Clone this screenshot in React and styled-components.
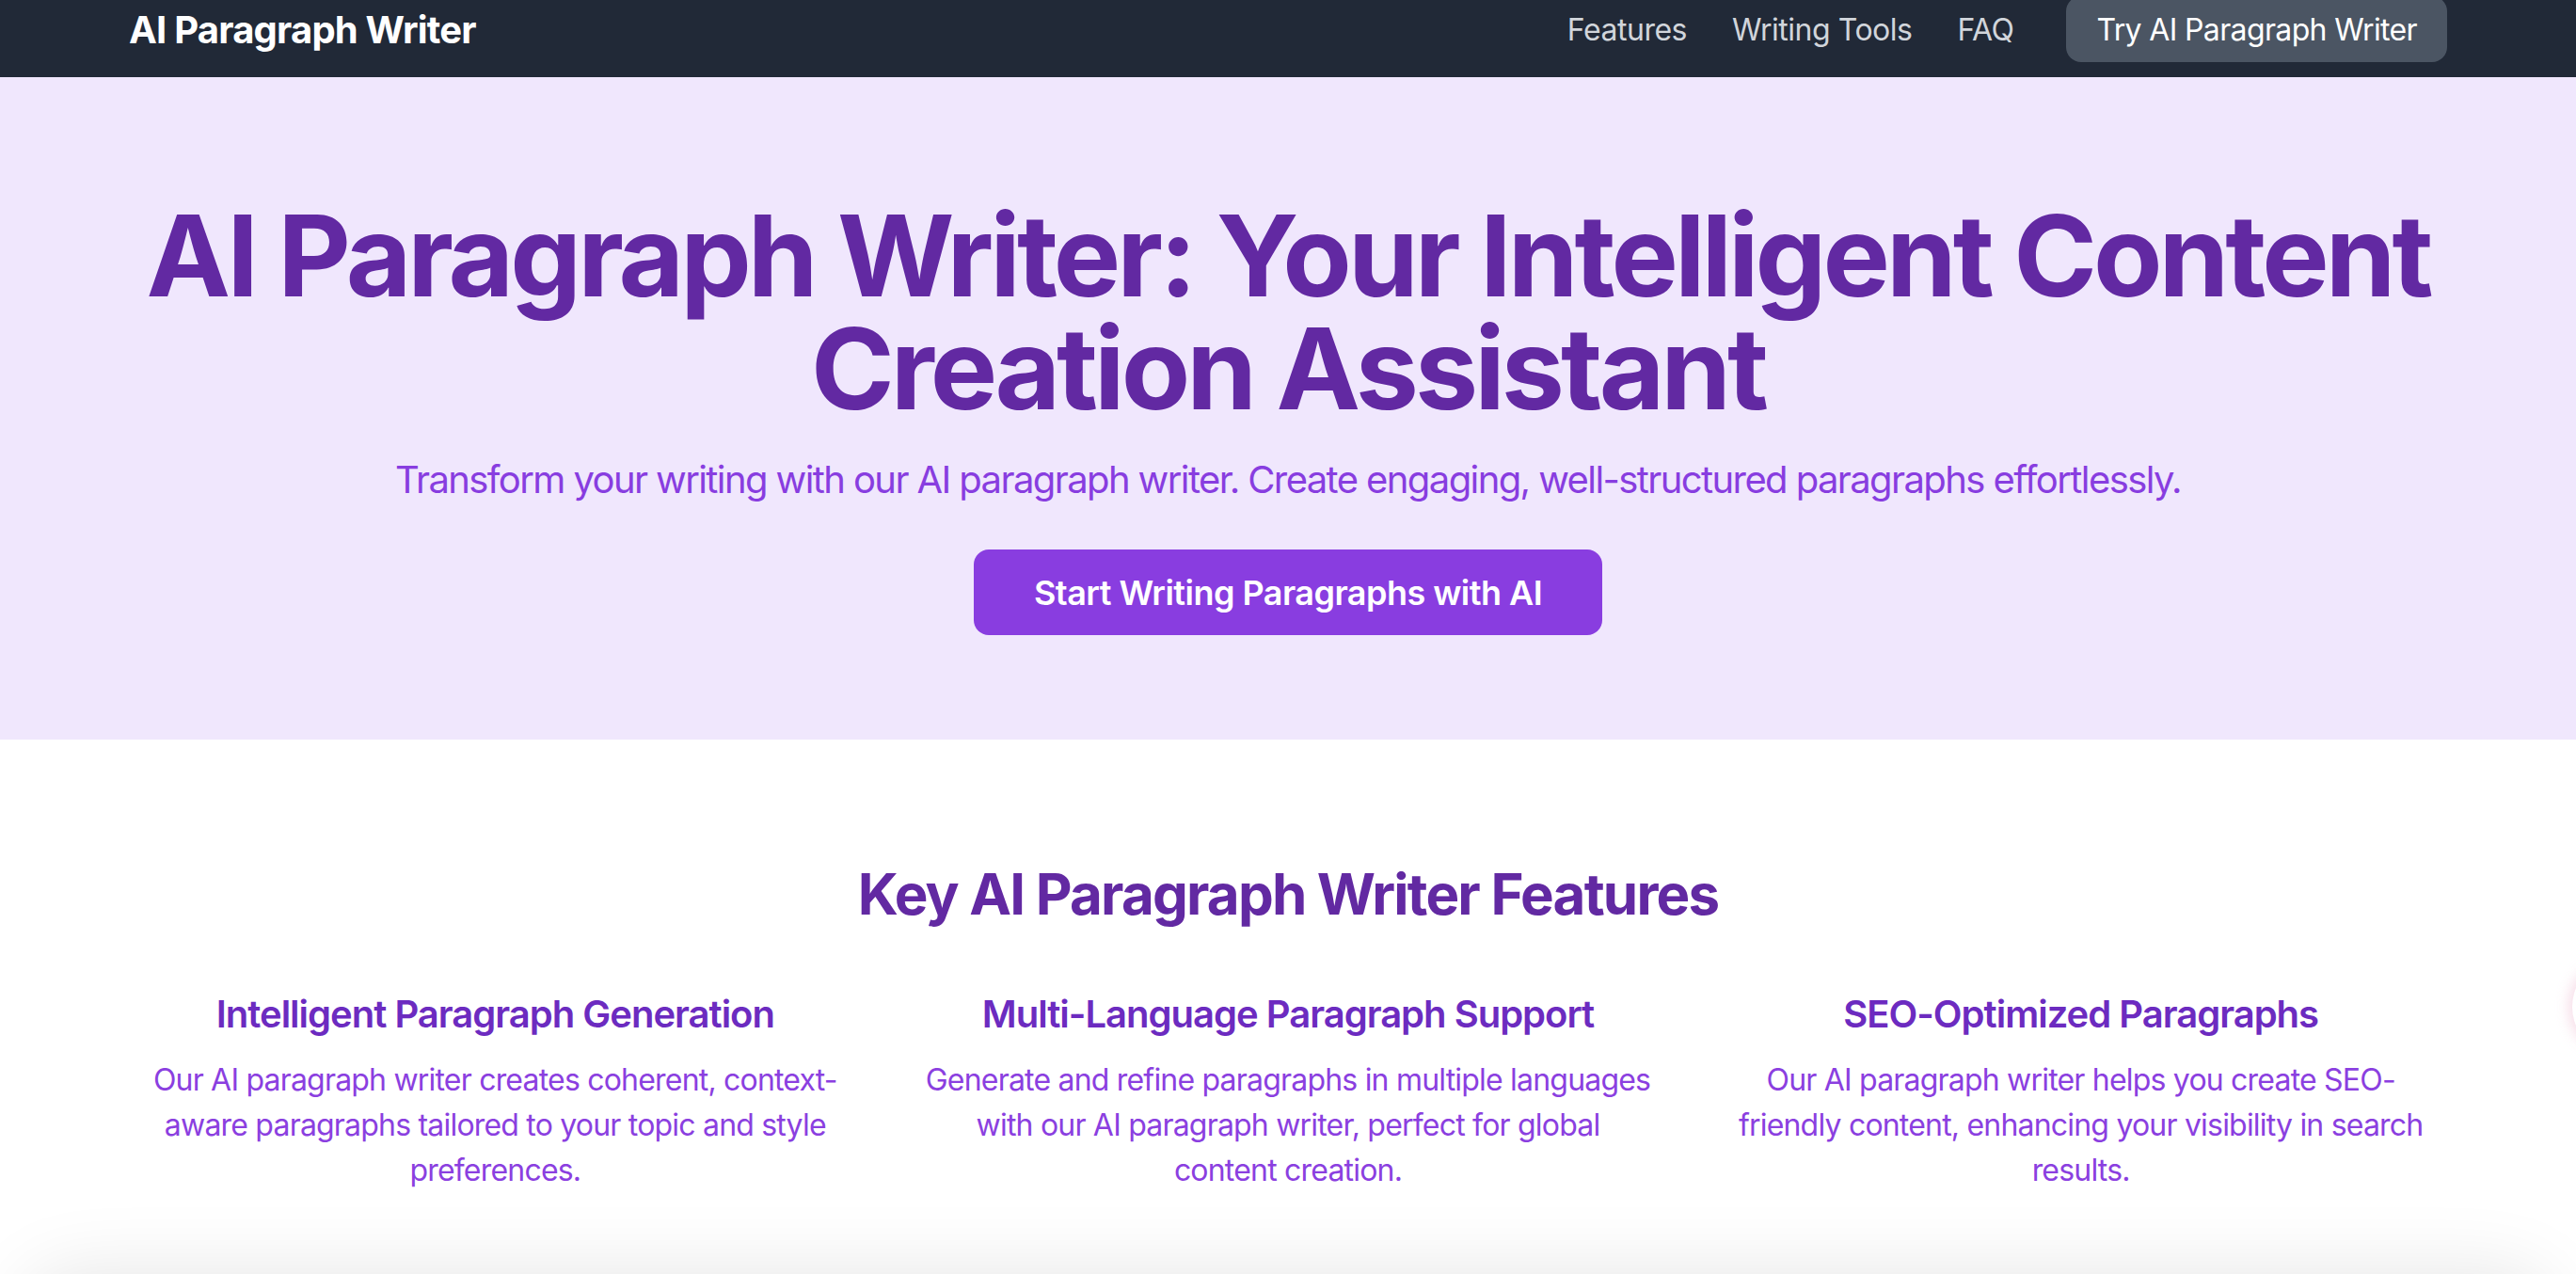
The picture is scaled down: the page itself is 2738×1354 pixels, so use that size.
import React from 'react';
import styled, { createGlobalStyle } from 'styled-components';

const GlobalStyle = createGlobalStyle`
  html, body {
    margin: 0;
    padding: 0;
    background: #fff;
  }
  body {
    font-family: Inter, "Noto Sans", "Liberation Sans", sans-serif;
    -webkit-font-smoothing: antialiased;
  }
  * { box-sizing: border-box; }
`;

const Page = styled.div`
  position: relative;
  height: 100vh;
  overflow: hidden;
`;

const Container = styled.div`
  max-width: 2560px;
  margin: 0 auto;
  padding: 0 48px;
`;

const NavBar = styled.nav`
  background: #212937;
  height: 82px;
  overflow: hidden;
`;

const NavInner = styled(Container)`
  display: flex;
  align-items: center;
  justify-content: space-between;
  height: 70px;
  margin-top: -4px;
`;

const Logo = styled.a`
  color: #fff;
  font-size: 40px;
  font-weight: 700;
  letter-spacing: -0.02em;
  text-decoration: none;
`;

const NavLinks = styled.div`
  display: flex;
  align-items: center;
  gap: 48px;
  height: 100%;
`;

const NavLink = styled.a`
  color: #d1d5db;
  font-size: 32px;
  letter-spacing: -0.015em;
  text-decoration: none;
`;

const NavButton = styled.a`
  display: flex;
  align-items: center;
  height: 100%;
  margin-left: 8px;
  padding: 0 32px;
  border-radius: 16px;
  background: #4b5563;
  color: #fff;
  font-size: 32px;
  letter-spacing: -0.02em;
  text-decoration: none;
`;

const Hero = styled.header`
  background: #f0e7fd;
  padding: 130px 0 111px;
  text-align: center;
`;

const HeroTitle = styled.h1`
  margin: 0 0 30px;
  color: #6229a2;
  font-size: 120px;
  font-weight: 700;
  line-height: 1;
  letter-spacing: -0.033em;
`;

const TitleLine = styled.span`
  display: block;
  white-space: nowrap;
`;

const HeroSub = styled.p`
  margin: 0 0 46px;
  color: #883de0;
  font-size: 40px;
  line-height: 56px;
  letter-spacing: -0.04em;
`;

const PrimaryButton = styled.a`
  display: inline-flex;
  align-items: center;
  height: 91px;
  padding: 0 64px;
  border-radius: 16px;
  background: #893de0;
  color: #fff;
  font-size: 36px;
  font-weight: 600;
  letter-spacing: -0.015em;
  text-decoration: none;
`;

const Features = styled.section`
  padding: 128px 0 100px;
  text-align: center;
`;

const SectionTitle = styled.h2`
  margin: 0 0 64px;
  color: #6229a2;
  font-size: 60px;
  font-weight: 700;
  line-height: 72px;
  letter-spacing: -0.03em;
`;

const FeatureGrid = styled.div`
  display: grid;
  grid-template-columns: repeat(3, 1fr);
  gap: 64px;
`;

const FeatureCard = styled.div`
  padding: 0 3px;
`;

const FeatureTitle = styled.h3`
  margin: 0 0 18px;
  color: #6c2bc0;
  font-size: 40px;
  font-weight: 600;
  line-height: 56px;
  letter-spacing: -0.025em;
`;

const FeatureText = styled.p`
  margin: 0;
  color: #8b3fe0;
  font-size: 32px;
  line-height: 48px;
  letter-spacing: -0.025em;
`;

const NextCard = styled.div`
  margin: 0 40px;
  height: 400px;
  border-radius: 40px;
  background: #fff;
  box-shadow: 0 0 80px 16px rgba(0, 0, 0, 0.1);
`;

const ChatBubble = styled.div`
  position: absolute;
  top: 1030px;
  right: -56px;
  width: 60px;
  height: 80px;
  border-radius: 50%;
  background: #fff;
  box-shadow: 0 0 14px 4px rgba(236, 180, 205, 0.45);
`;

const features = [
  {
    title: 'Intelligent Paragraph Generation',
    text: 'Our AI paragraph writer creates coherent, context-aware paragraphs tailored to your topic and style preferences.',
  },
  {
    title: 'Multi-Language Paragraph Support',
    text: 'Generate and refine paragraphs in multiple languages with our AI paragraph writer, perfect for global content creation.',
  },
  {
    title: 'SEO-Optimized Paragraphs',
    text: 'Our AI paragraph writer helps you create SEO-friendly content, enhancing your visibility in search results.',
  },
];

const App = () => {
  return (
    <Page>
      <GlobalStyle />
      <NavBar>
        <NavInner>
          <Logo href="#">AI Paragraph Writer</Logo>
          <NavLinks>
            <NavLink href="#features">Features</NavLink>
            <NavLink href="#tools">Writing Tools</NavLink>
            <NavLink href="#faq">FAQ</NavLink>
            <NavButton href="#try">Try AI Paragraph Writer</NavButton>
          </NavLinks>
        </NavInner>
      </NavBar>
      <Hero>
        <Container>
          <HeroTitle>
            <TitleLine>AI Paragraph Writer: Your Intelligent Content</TitleLine>
            <TitleLine>Creation Assistant</TitleLine>
          </HeroTitle>
          <HeroSub>
            Transform your writing with our AI paragraph writer. Create engaging, well-structured paragraphs effortlessly.
          </HeroSub>
          <PrimaryButton href="#start">Start Writing Paragraphs with AI</PrimaryButton>
        </Container>
      </Hero>
      <Features id="features">
        <Container>
          <SectionTitle>Key AI Paragraph Writer Features</SectionTitle>
          <FeatureGrid>
            {features.map((f) => (
              <FeatureCard key={f.title}>
                <FeatureTitle>{f.title}</FeatureTitle>
                <FeatureText>{f.text}</FeatureText>
              </FeatureCard>
            ))}
          </FeatureGrid>
        </Container>
      </Features>
      <NextCard />
      <ChatBubble />
    </Page>
  );
};

export default App;
